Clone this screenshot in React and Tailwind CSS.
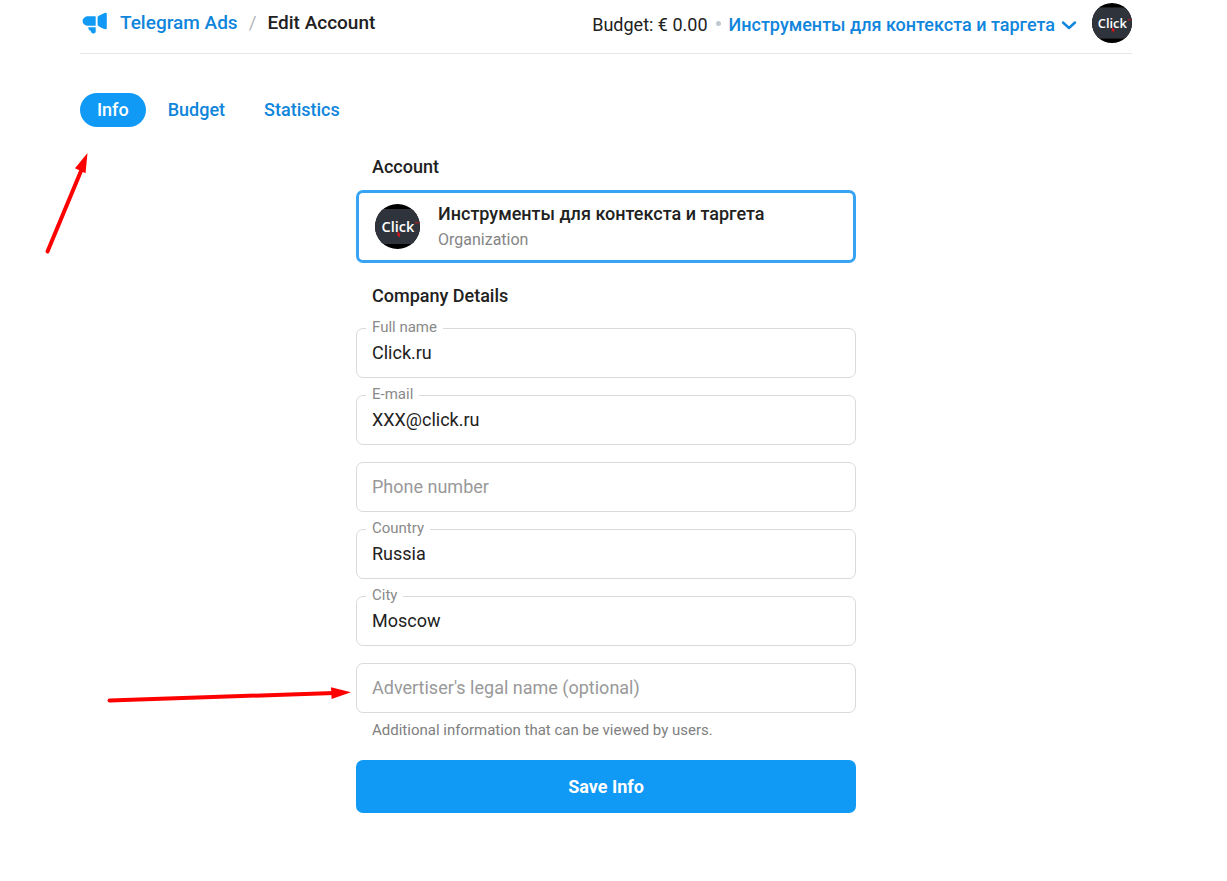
import { useId } from "react";

function Avatar({ className }) {
  const clipId = useId();
  return (
    <svg viewBox="0 0 45 45" className={className} role="img" aria-label="Click">
      <defs>
        <clipPath id={clipId}>
          <circle cx="22.5" cy="22.5" r="22.5" />
        </clipPath>
      </defs>
      <g clipPath={`url(#${clipId})`}>
        <rect width="45" height="45" fill="#000" />
        <rect y="5" width="45" height="35" fill="#2f333b" />
        <text
          x="6.5"
          y="28"
          fontFamily="'Open Sans', sans-serif"
          fontSize="14.5"
          fontWeight="600"
          fill="#fff"
        >
          Click
        </text>
        <path d="M22.500 27.500l3.400 3-1.600.3.8 2.200-1 .3-.9-2.100-.9 1z" fill="#e3141c" />
        <path d="M40 18.200h2M41 18.200v2M42.800 20v-2l1 1 1-1v2" stroke="#b3202a" strokeWidth=".8" fill="none" />
      </g>
    </svg>
  );
}

function Megaphone() {
  return (
    <svg viewBox="0 0 26 22" className="h-[22px] w-[26px] shrink-0" fill="#119af5" aria-hidden="true">
      <path d="M6.300 4.200h7.400v9.600H6.300C3.200 13.800.6 11.700.6 9s2.600-4.800 5.700-4.800z" />
      <path d="M22.600.9c1.400-.6 2.200 0 2.200 1.200v13.800c0 1.200-.8 1.800-2.200 1.200-2.200-.9-4.400-2-5.800-2.900-.8-.5-1.200-1-1.200-1.800V5.600c0-.8.400-1.300 1.200-1.800C18.200 2.900 20.400 1.800 22.600.9z" />
      <path d="M6.200 15.200h7.500v4.400c0 1.100-.8 1.900-1.900 1.900H11c-1 0-1.600-.5-1.900-1.400l-.5-1.400c-1.400-.2-2.300-1.600-2.400-3.500z" />
    </svg>
  );
}

function Field({ label, value, type = "text", describedBy, children }) {
  const id = useId();
  return (
    <div className="relative">
      <input
        id={id}
        type={type}
        defaultValue={value}
        placeholder={value ? undefined : label}
        aria-label={label}
        aria-describedby={describedBy}
        className="block h-[50px] w-full rounded-[7px] border border-[#d9dadb] bg-white px-[15px] pb-[2px] text-lg text-[#212121] outline-none placeholder:text-[#999] focus:border-[#36a3f5]"
      />
      {value && (
        <label
          htmlFor={id}
          className="absolute -top-[11px] left-[10px] bg-white px-[6px] text-[15px] leading-5 text-[#8a8a8a]"
        >
          {label}
        </label>
      )}
      {children}
    </div>
  );
}

export default function App() {
  return (
    <div className="bg-white pr-[15px] font-['Roboto',sans-serif] text-lg text-[#212121]">
      <div className="mx-auto max-w-[1052px] pb-16">
        <header className="flex h-[54px] items-start justify-between border-b border-[#e6e7e8]">
          <nav aria-label="Breadcrumb" className="flex items-center pt-[9px] text-[19px] leading-7 font-medium">
            <a href="#" className="flex items-center gap-3 pl-[2px] text-[#0f85dc]">
              <Megaphone />
              Telegram Ads
            </a>
            <span className="px-[11px] font-normal text-[#b5b9bd]">/</span>
            <span>Edit Account</span>
          </nav>
          <div className="flex items-center pt-[3px]">
            <span className="pt-1">Budget: € 0.00</span>
            <span className="mx-2 size-[5px] rounded-full bg-[#c0c8d0]" />
            <button type="button" className="flex items-center gap-[6px] pt-1 font-medium text-[#0f85dc]">
              Инструменты для контекста и таргета
              <svg viewBox="0 0 16 10" className="h-[10px] w-4" fill="none" stroke="currentColor" strokeWidth="2.4" strokeLinecap="round" strokeLinejoin="round" aria-hidden="true">
                <path d="M2 2.500l6 5.500 6-5.500" />
              </svg>
            </button>
            <Avatar className="ml-[15px] size-10" />
          </div>
        </header>

        <nav aria-label="Account sections" className="relative mt-[39px] flex h-[34px] items-stretch font-medium">
          <a href="#" aria-current="page" className="flex items-center rounded-full bg-[#119af5] px-[17px] text-white">
            Info
          </a>
          <a href="#" className="ml-[5px] flex items-center px-[17px] text-[#0f85dc]">
            Budget
          </a>
          <a href="#" className="ml-[5px] flex items-center px-[17px] text-[#0f85dc]">
            Statistics
          </a>
          <svg viewBox="0 0 60 115" className="pointer-events-none absolute top-[52px] -left-10 h-[115px] w-[60px]" aria-hidden="true">
            <path d="M7.500 106.500L41 26" stroke="#f00" strokeWidth="4" strokeLinecap="round" />
            <path d="M47.500 8L35 23.300l10.500 4.900z" fill="#f00" />
          </svg>
        </nav>

        <form className="mx-auto mt-7 flex max-w-[500px] flex-col" onSubmit={(e) => e.preventDefault()}>
          <h2 className="px-4 leading-6 font-medium">Account</h2>
          <div className="mt-[11px] flex h-[73px] items-center gap-[18px] rounded-[7px] border-[3px] border-[#36a3f5] px-4">
            <Avatar className="size-[45px] shrink-0" />
            <div>
              <div className="leading-6 font-medium">Инструменты для контекста и таргета</div>
              <div className="pt-[2px] text-base leading-6 text-[#858585]">Organization</div>
            </div>
          </div>

          <h2 className="mt-[21px] px-4 leading-6 font-medium">Company Details</h2>
          <div className="mt-5 flex flex-col gap-[17px]">
            <Field label="Full name" value="Click.ru" />
            <Field label="E-mail" value="XXX@click.ru" />
            <Field label="Phone number" type="tel" />
            <Field label="Country" value="Russia" />
            <Field label="City" value="Moscow" />
            <Field label="Advertiser's legal name (optional)" describedBy="legal-name-hint">
              <svg viewBox="0 0 260 30" className="pointer-events-none absolute top-4 -left-[256px] h-[30px] w-[260px]" aria-hidden="true">
                <path d="M9.500 21.500L234 14" stroke="#f00" strokeWidth="4" strokeLinecap="round" />
                <path d="M251 13.300l-20-5 .6 11.700z" fill="#f00" />
              </svg>
            </Field>
          </div>
          <p id="legal-name-hint" className="mt-[7px] px-4 text-[15px] leading-5 text-[#808080]">
            Additional information that can be viewed by users.
          </p>
          <button type="submit" className="mt-5 h-[53px] rounded-[7px] bg-[#119af5] font-bold text-white">
            Save Info
          </button>
        </form>
      </div>
    </div>
  );
}
